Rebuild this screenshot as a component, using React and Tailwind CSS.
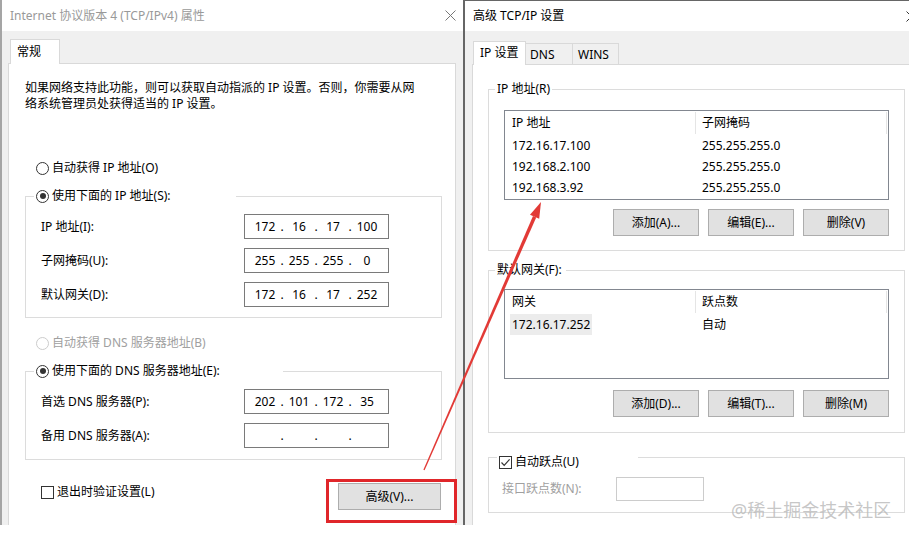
import { Fragment } from 'react';

const FONT = "font-['Noto_Sans','Noto_Sans_CJK_SC',sans-serif]";

function CloseX({ className }) {
  return (
    <svg width="11" height="11" viewBox="0 0 11 11" className={className}>
      <path d="M0.5 0.5 L10.5 10.5 M10.5 0.5 L0.5 10.5" stroke="currentColor" strokeWidth="1" fill="none" />
    </svg>
  );
}

function Radio({ checked, disabled }) {
  return (
    <span
      className={`flex h-[13px] w-[13px] shrink-0 items-center justify-center rounded-full border bg-white ${
        disabled ? 'border-[#cccccc]' : 'border-[#333333]'
      }`}
    >
      {checked && <span className="h-[6px] w-[6px] rounded-full bg-[#333333]" />}
    </span>
  );
}

function Checkbox({ checked }) {
  return (
    <span className="flex h-[13px] w-[13px] shrink-0 items-center justify-center border border-[#333333] bg-white">
      {checked && (
        <svg width="11" height="11" viewBox="0 0 11 11">
          <path d="M1.5 5.5 L4.2 8.3 L9.6 2.3" stroke="#333333" strokeWidth="1.2" fill="none" />
        </svg>
      )}
    </span>
  );
}

function IpBox({ parts }) {
  return (
    <div className="flex h-[25px] w-[145px] items-center border border-[#7a7a7a] bg-white pl-[7px] text-[12px] leading-[16px]">
      {parts.map((p, i) => (
        <Fragment key={i}>
          {i > 0 && <span className="w-[8px] text-center">.</span>}
          <span className="w-[26px] text-center">{p}</span>
        </Fragment>
      ))}
    </div>
  );
}

function Button({ children, className = '' }) {
  return (
    <button className={`h-[27px] border border-[#adadad] bg-[#e1e1e1] text-[12px] leading-[16px] text-black ${className}`}>
      {children}
    </button>
  );
}

function ListBox({ head, rows, highlightFirst }) {
  return (
    <div className="ml-[15px] h-[90px] w-[385px] border border-[#828790] bg-white text-[12px] leading-[16px]">
      <div className="flex h-[24px] items-center">
        <span className="w-[190px] pl-[7px]">{head[0]}</span>
        <span className="h-[22px] w-px bg-[#e5e5e5]" />
        <span className="w-[190px] pl-[6px]">{head[1]}</span>
        <span className="h-[22px] w-px bg-[#e5e5e5]" />
      </div>
      {rows.map((r, i) => (
        <div key={i} className="flex h-[21px] items-center">
          <span className="flex h-[21px] w-[191px] items-center pl-[5px]">
            <span className={`flex h-[21px] items-center px-[2px] ${highlightFirst && i === 0 ? 'bg-[#ececec]' : ''}`}>{r[0]}</span>
          </span>
          <span className="pl-[6px]">{r[1]}</span>
        </div>
      ))}
    </div>
  );
}

function LeftDialog() {
  return (
    <div className="flex w-[463px] shrink-0 flex-col border-l-2 border-[#a5a5a5] bg-[#f0f0f0]">
      <div className="flex h-[31px] items-center bg-white pl-[8px] pr-[7px] text-[12px] leading-[16px] text-[#999999]">
        <span>Internet 协议版本 4 (TCP/IPv4) 属性</span>
        <CloseX className="ml-auto text-[#777777]" />
      </div>
      <div className="flex flex-1 flex-col pl-[6px] pr-[7px] pt-[8px]">
        <div className="relative z-10 -mb-px ml-[2px] flex h-[25px] w-[50px] items-center border-x border-t border-[#d9d9d9] bg-white pl-[6px] text-[12px] leading-[16px]">
          常规
        </div>
        <div className="flex-1 border-x border-t border-[#d9d9d9] bg-white text-[12px] leading-[16px]">
          <p className="ml-[16px] mt-[16px] whitespace-nowrap">
            如果网络支持此功能，则可以获取自动指派的 IP 设置。否则，你需要从网
            <br />
            络系统管理员处获得适当的 IP 设置。
          </p>

          <div className="ml-[27px] mt-[48px] flex h-[16px] items-center gap-[3px]">
            <Radio />
            <span>自动获得 IP 地址(O)</span>
          </div>

          <fieldset className="ml-[16px] mt-[12px] w-[417px] border border-[#dcdcdc] pb-[10px]">
            <legend className="ml-[8px] flex h-[16px] w-[202px] items-center gap-[3px] pl-[2px]">
              <Radio checked />
              <span>使用下面的 IP 地址(S):</span>
            </legend>
            {[
              ['IP 地址(I):', ['172', '16', '17', '100']],
              ['子网掩码(U):', ['255', '255', '255', '0']],
              ['默认网关(D):', ['172', '16', '17', '252']],
            ].map(([label, parts], i) => (
              <div key={label} className={`flex h-[25px] items-center pl-[15px] ${i === 0 ? 'mt-[10px]' : 'mt-[9px]'}`}>
                <span className="w-[203px]">{label}</span>
                <IpBox parts={parts} />
              </div>
            ))}
          </fieldset>

          <div className="ml-[27px] mt-[17px] flex h-[16px] items-center gap-[3px] text-[#a0a0a0]">
            <Radio disabled />
            <span>自动获得 DNS 服务器地址(B)</span>
          </div>

          <fieldset className="ml-[16px] mt-[12px] w-[417px] border border-[#dcdcdc] pb-[11px]">
            <legend className="ml-[8px] flex h-[16px] w-[249px] items-center gap-[3px] pl-[2px]">
              <Radio checked />
              <span>使用下面的 DNS 服务器地址(E):</span>
            </legend>
            <div className="mt-[10px] flex h-[25px] items-center pl-[15px]">
              <span className="w-[203px]">首选 DNS 服务器(P):</span>
              <IpBox parts={['202', '101', '172', '35']} />
            </div>
            <div className="mt-[9px] flex h-[25px] items-center pl-[15px]">
              <span className="w-[203px]">备用 DNS 服务器(A):</span>
              <IpBox parts={['', '', '', '']} />
            </div>
          </fieldset>

          <div className="mt-[23px] flex items-start">
            <div className="ml-[32px] mt-[1px] flex items-center gap-[3px]">
              <Checkbox />
              <span>退出时验证设置(L)</span>
            </div>
            <Button className="ml-auto mr-[14px] w-[103px]">高级(V)...</Button>
          </div>
        </div>
      </div>
    </div>
  );
}

function RightDialog() {
  return (
    <div className="flex min-w-0 flex-1 flex-col overflow-hidden border-l-2 border-t border-[#666666] bg-[#f0f0f0]">
      <div className="flex h-[30px] shrink-0 items-center bg-white pl-[8px] text-[12px] leading-[16px] text-black">
        <span>高级 TCP/IP 设置</span>
        <CloseX className="-mr-[8px] ml-auto shrink-0 text-[#333333]" />
      </div>
      <div className="flex flex-1 flex-col pl-[7px] pt-[10px]">
        <div className="-mb-px flex h-[24px] items-end text-[12px] leading-[16px]">
          <div className="relative z-10 ml-[1px] flex h-[24px] w-[53px] items-center border-x border-t border-[#d9d9d9] bg-white pb-[1px] pl-[6px]">
            IP 设置
          </div>
          <div className="flex h-[22px] w-[47px] items-center border-r border-t border-[#d9d9d9] pl-[4px]">DNS</div>
          <div className="flex h-[22px] w-[46px] items-center border-r border-t border-[#d9d9d9] pl-[5px]">WINS</div>
        </div>
        <div className="w-[445px] flex-1 border-x border-t border-[#d9d9d9] bg-white text-[12px] leading-[16px]">
          <fieldset className="ml-[15px] mt-[16px] w-[417px] border border-[#dcdcdc] pb-[14px]">
            <legend className="ml-[6px] h-[16px] px-[2px]">IP 地址(R)</legend>
            <div className="mt-[13px]">
              <ListBox
                head={['IP 地址', '子网掩码']}
                rows={[
                  ['172.16.17.100', '255.255.255.0'],
                  ['192.168.2.100', '255.255.255.0'],
                  ['192.168.3.92', '255.255.255.0'],
                ]}
              />
            </div>
            <div className="ml-[15px] mt-[9px] flex w-[385px] justify-end gap-[9px]">
              <Button className="w-[86px]">添加(A)...</Button>
              <Button className="w-[86px]">编辑(E)...</Button>
              <Button className="w-[86px]">删除(V)</Button>
            </div>
          </fieldset>

          <fieldset className="ml-[15px] mt-[11px] w-[417px] border border-[#dcdcdc] pb-[15px]">
            <legend className="ml-[6px] h-[16px] px-[2px] pr-[4px]">默认网关(F):</legend>
            <div className="mt-[11px]">
              <ListBox head={['网关', '跃点数']} rows={[['172.16.17.252', '自动']]} highlightFirst />
            </div>
            <div className="ml-[15px] mt-[11px] flex w-[385px] justify-end gap-[9px]">
              <Button className="w-[86px]">添加(D)...</Button>
              <Button className="w-[86px]">编辑(T)...</Button>
              <Button className="w-[86px]">删除(M)</Button>
            </div>
          </fieldset>

          <fieldset className="ml-[15px] mt-[11px] w-[417px] border border-[#dcdcdc] pb-[11px]">
            <legend className="ml-[8px] h-[26px] w-[141px] pl-[2px] pt-[10px]">
              <span className="flex h-[16px] items-center gap-[3px]">
                <Checkbox checked />
                <span>自动跃点(U)</span>
              </span>
            </legend>
            <div className="mt-[7px] flex h-[24px] items-center pl-[13px]">
              <span className="w-[114px] text-[#a0a0a0]">接口跃点数(N):</span>
              <span className="h-[24px] w-[88px] border border-[#cccccc] bg-white" />
            </div>
          </fieldset>
        </div>
      </div>
    </div>
  );
}

export default function App() {
  return (
    <div className={`relative h-[537px] w-[909px] overflow-hidden bg-white text-black ${FONT}`}>
      <div className="flex h-[525px]">
        <LeftDialog />
        <RightDialog />
      </div>

      {/* annotation: red frame + arrow */}
      <div className="pointer-events-none absolute left-[326px] top-[479px] h-[44px] w-[131px] border-[3px] border-[#e0262a]" />
      <svg className="pointer-events-none absolute left-0 top-0" width="909" height="537">
        <polygon points="423.4,469.7 424.6,470.3 536.2,217.4 533.0,216.0" fill="#e23a36" />
        <polygon points="541,202 539.2,218.7 530.0,214.7" fill="#e23a36" />
      </svg>

      <div className="pointer-events-none absolute left-[731px] top-[498px] whitespace-nowrap text-[18px] leading-[24px] text-[#b8b8b8]/80">
        @稀土掘金技术社区
      </div>
    </div>
  );
}
